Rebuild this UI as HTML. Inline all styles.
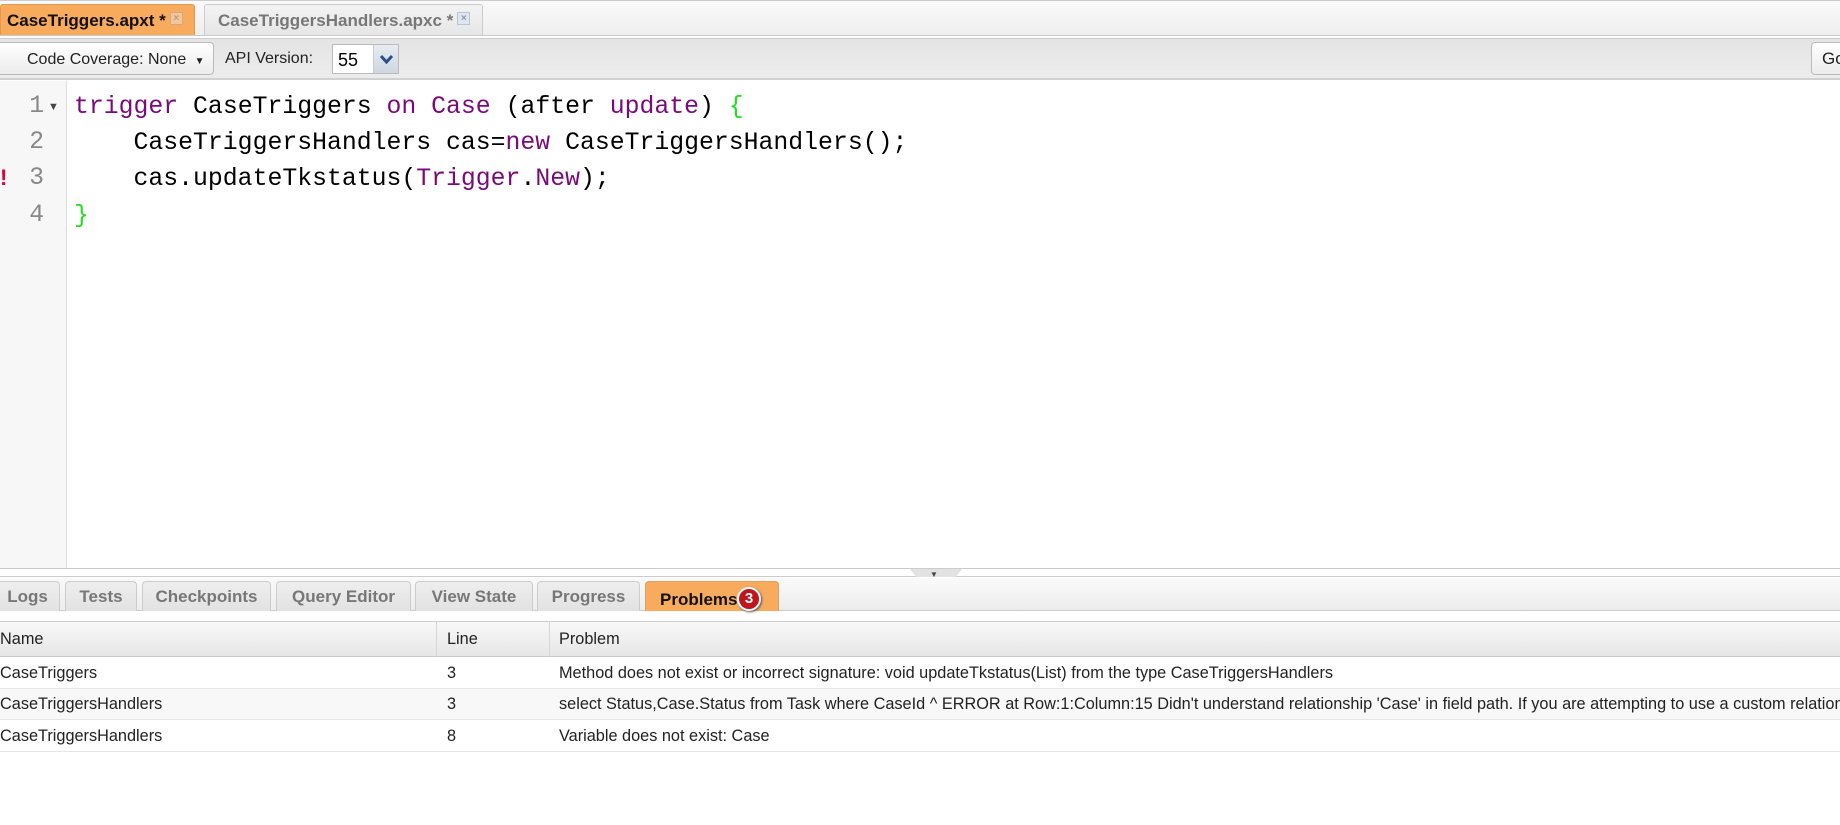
<!DOCTYPE html>
<html><head><meta charset="utf-8"><style>
*{box-sizing:border-box;margin:0;padding:0}
body{width:1840px;height:825px;overflow:hidden;background:#fff;font-family:"Liberation Sans",Tahoma,sans-serif;position:relative}
.a{position:absolute}
.tab{position:absolute;top:4px;height:31px;border:1px solid #ccc;border-bottom:none;border-radius:3px 3px 0 0;font-weight:bold;font-size:17px;line-height:32px;padding-left:6px;white-space:nowrap}
.x{display:inline-block;width:13px;height:13px;border:1px solid #b9c4d4;background:#dfe6f0;color:#8a9bb5;font-size:10px;line-height:11px;text-align:center;vertical-align:top;margin-top:7px;margin-left:4px}
.code{position:absolute;left:74px;font-family:"Liberation Mono","DejaVu Sans Mono",monospace;font-size:24.8px;white-space:pre;color:#000}
.ln{position:absolute;left:0;width:44px;text-align:right;font-family:"Liberation Mono",monospace;font-size:24.6px;color:#888}
.k{color:#7a0a7a}.g{color:#22dd22}
.bt{position:absolute;top:581px;height:30px;border:1px solid #ccc;border-bottom:none;border-radius:4px 4px 0 0;background:linear-gradient(#eee,#e2e2e2);color:#777;font-weight:bold;font-size:17px;line-height:30px;text-align:center}
.cell{position:absolute;font-size:16.3px;color:#222;white-space:nowrap}
</style></head><body>
<div class="a" style="left:0;top:0;width:1840px;height:36px;background:linear-gradient(#fafafa,#eee);border-top:1px solid #ccc;border-bottom:1px solid #ccc"></div>
<div class="tab" style="left:0;width:195px;background:#f8ab5d;color:#111;border-color:#e09a50">CaseTriggers.apxt *<span class="x" style="background:#f0c79c;border-color:#d9a777;color:#c4996d">×</span></div>
<div class="tab" style="left:204px;width:279px;background:linear-gradient(#f3f3f3,#e6e6e6);color:#777;padding-left:13px">CaseTriggersHandlers.apxc *<span class="x">×</span></div>
<div class="a" style="left:0;top:38px;width:1840px;height:42px;background:linear-gradient(#e4e4e4,#ececec);border-top:1px solid #ccc;border-bottom:2px solid #d0d0d0"></div>
<div class="a" style="left:-4px;top:42px;width:218px;height:33px;border:1px solid #bbb;border-radius:4px;background:linear-gradient(#fff,#ececec);font-size:16px;line-height:33px;padding-left:30px;color:#222">Code Coverage: None <span style="font-size:10px;margin-left:4px">▼</span></div>
<div class="a" style="left:225px;top:50px;font-size:16px;color:#222">API Version:</div>
<div class="a" style="left:332px;top:44px;width:67px;height:30px;border:1px solid #bbb;background:#fff;font-size:18px;line-height:30px;padding-left:5px">55</div>
<div class="a" style="left:373px;top:45px;width:25px;height:28px;background:linear-gradient(#e8ecf2,#cfd6e0);border-left:1px solid #c6ccd6"><svg width="25" height="28"><path d="M7 11 L12.5 17 L18 11" stroke="#2b4f86" stroke-width="3" fill="none"/></svg></div>
<div class="a" style="left:1811px;top:42px;width:40px;height:33px;border:1px solid #bbb;border-radius:4px;background:linear-gradient(#fff,#ececec);font-size:17px;line-height:31px;padding-left:10px;color:#222">Go</div>
<div class="a" style="left:0;top:81px;width:67px;height:488px;background:#f7f7f7;border-right:1px solid #ddd"></div>
<div class="ln" style="top:93px">1</div><div class="a" style="left:48px;top:101px;font-size:11px;color:#444">▼</div>
<div class="ln" style="top:129px">2</div>
<div class="a" style="left:0;top:165px;color:#e0003a;font-size:22px;font-weight:bold">!</div>
<div class="ln" style="top:165px">3</div>
<div class="ln" style="top:202px">4</div>
<div class="code" style="top:93px"><span class="k">trigger</span> CaseTriggers <span class="k">on</span> <span class="k">Case</span> (after <span class="k">update</span>) <span class="g">{</span></div>
<div class="code" style="top:129px">    CaseTriggersHandlers cas=<span class="k">new</span> CaseTriggersHandlers();</div>
<div class="code" style="top:165px">    cas.updateTkstatus(<span class="k">Trigger</span>.<span class="k">New</span>);</div>
<div class="code" style="top:202px"><span class="g">}</span></div>
<div class="a" style="left:0;top:568px;width:1840px;height:1px;background:#ccc"></div>
<div class="a" style="left:0;top:569px;width:1840px;height:8px;background:#fff;border-bottom:1px solid #ccc"></div>
<div class="a" style="left:910px;top:569px;width:52px;height:8px;background:#e2e2e2;clip-path:polygon(0 0,100% 0,88% 100%,12% 100%)"></div>
<div class="a" style="left:930px;top:570px;font-size:8px;color:#444">▼</div>
<div class="a" style="left:0;top:578px;width:1840px;height:33px;background:linear-gradient(#fafafa,#ececec);border-bottom:1px solid #ccc"></div>
<div class="bt" style="left:-5px;width:65px">Logs</div>
<div class="bt" style="left:65px;width:72px">Tests</div>
<div class="bt" style="left:142px;width:129px">Checkpoints</div>
<div class="bt" style="left:276px;width:135px">Query Editor</div>
<div class="bt" style="left:415px;width:118px">View State</div>
<div class="bt" style="left:537px;width:103px">Progress</div>
<div class="bt" style="left:645px;width:134px;background:#f8ab5d;color:#111;border-color:#e0a060;line-height:36px;text-align:left;padding-left:14px">Problems</div>
<div class="a" style="left:737px;top:587px;width:24px;height:24px;border-radius:50%;background:#c0151c;border:2px solid #fff;box-shadow:1px 1px 2px #555;color:#fff;font-weight:bold;font-size:15px;line-height:20px;text-align:center">3</div>
<div class="a" style="left:0;top:621px;width:1840px;height:36px;background:linear-gradient(#f8f8f8,#e6e6e6);border-top:1px solid #ccc;border-bottom:1px solid #c8c8c8"></div>
<div class="a" style="left:436px;top:622px;width:1px;height:35px;background:#d6d6d6"></div>
<div class="a" style="left:549px;top:622px;width:1px;height:35px;background:#d6d6d6"></div>
<div class="cell" style="left:0;top:630px">Name</div>
<div class="cell" style="left:447px;top:630px">Line</div>
<div class="cell" style="left:559px;top:630px">Problem</div>
<div class="a" style="left:0;top:688px;width:1840px;height:32px;background:#f8f8f8;border-top:1px solid #e6e6e6;border-bottom:1px solid #e6e6e6"></div>
<div class="a" style="left:0;top:751px;width:1840px;height:1px;background:#e6e6e6"></div>
<div class="cell" style="left:0;top:664px">CaseTriggers</div>
<div class="cell" style="left:447px;top:664px">3</div>
<div class="cell" style="left:559px;top:664px">Method does not exist or incorrect signature: void updateTkstatus(List) from the type CaseTriggersHandlers</div>
<div class="cell" style="left:0;top:695px">CaseTriggersHandlers</div>
<div class="cell" style="left:447px;top:695px">3</div>
<div class="cell" style="left:559px;top:695px">select Status,Case.Status from Task where CaseId ^ ERROR at Row:1:Column:15 Didn't understand relationship 'Case' in field path. If you are attempting to use a custom relationship</div>
<div class="cell" style="left:0;top:727px">CaseTriggersHandlers</div>
<div class="cell" style="left:447px;top:727px">8</div>
<div class="cell" style="left:559px;top:727px">Variable does not exist: Case</div>
</body></html>
